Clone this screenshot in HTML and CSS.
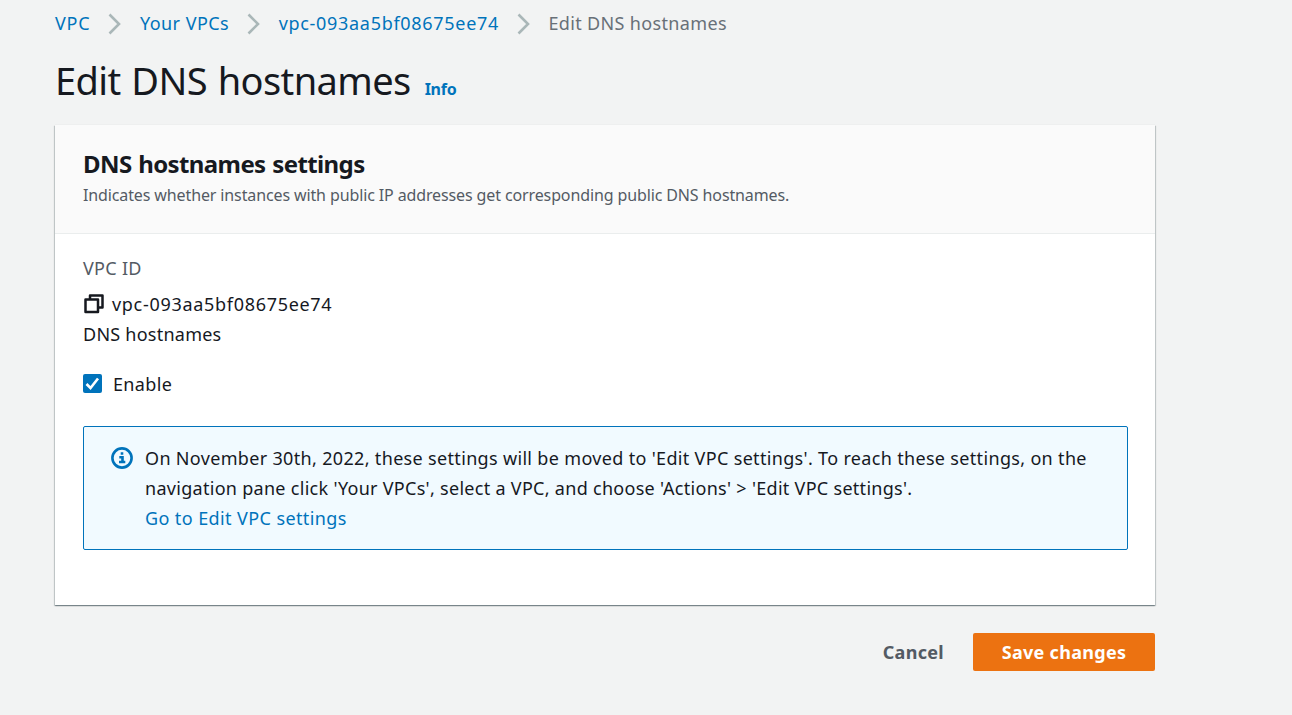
FILE: index.html
```html
<!DOCTYPE html>
<html lang="en">
<head>
<meta charset="utf-8">
<title>Edit DNS hostnames</title>
<link rel="stylesheet" href="styles.css">
</head>
<body>
<main class="page">
  <nav class="breadcrumbs">
    <a class="crumb-root">VPC</a>
    <svg class="chevron" viewBox="0 0 14 22"><path d="M1.5 2.5l9.5 9.5-9.5 9.5"/></svg>
    <a class="crumb-list">Your VPCs</a>
    <svg class="chevron" viewBox="0 0 14 22"><path d="M1.5 2.5l9.5 9.5-9.5 9.5"/></svg>
    <a class="vpc-id">vpc-093aa5bf08675ee74</a>
    <svg class="chevron" viewBox="0 0 14 22"><path d="M1.5 2.5l9.5 9.5-9.5 9.5"/></svg>
    <span class="crumb-current">Edit DNS hostnames</span>
  </nav>
  <header class="title"><h1>Edit DNS hostnames</h1><a class="info">Info</a></header>
  <section class="card">
    <div class="card-header">
      <h2>DNS hostnames settings</h2>
      <p>Indicates whether instances with public IP addresses get corresponding public DNS hostnames.</p>
    </div>
    <div class="card-body">
      <div class="label">VPC ID</div>
      <div class="copy-row">
        <svg class="copy" viewBox="0 0 21 20"><path d="M2.5 5.5h12.5v12.5h-12.5zM7 5V1.5h12.5v12H15.5"/></svg>
        <span class="vpc-id">vpc-093aa5bf08675ee74</span>
      </div>
      <div class="field">DNS hostnames</div>
      <label class="check-row">
        <svg class="checkbox" viewBox="0 0 19 19"><rect width="19" height="19" rx="2"/><path d="M3.5 10l4 4 7.5-9.5"/></svg>
        <span>Enable</span>
      </label>
      <div class="alert">
        <svg class="info-icon" viewBox="0 0 22 22"><circle cx="11" cy="11" r="9.6"/><path d="M11 5.2v2.6M8.3 10.2h3.2v5M8 15h6.3"/></svg>
        <div class="alert-text">
          <div class="alert-line">On November 30th, 2022, these settings will be moved to 'Edit VPC settings'. To reach these settings, on the</div>
          <div class="alert-line-end">navigation pane click 'Your VPCs', select a VPC, and choose 'Actions' &gt; 'Edit VPC settings'.</div>
          <a class="alert-link">Go to Edit VPC settings</a>
        </div>
      </div>
    </div>
  </section>
  <footer class="actions"><button class="cancel">Cancel</button><button class="save">Save changes</button></footer>
</main>
</body>
</html>
```
FILE: styles.css
```css
* { box-sizing: border-box; }
body { margin: 0; background: #f2f3f3; color: #16191f; font: 18px/30px "Noto Sans", "Open Sans", sans-serif; }
h1, h2, p { margin: 0; }
a { color: #0073bb; }
svg { fill: none; flex: none; }
.page { width: 1155px; padding-left: 55px; height: 715px; white-space: nowrap; }
.breadcrumbs { display: flex; align-items: center; height: 38px; padding-top: 8px; }
.crumb-root { letter-spacing: .8px; }
.crumb-list { letter-spacing: .45px; }
.vpc-id { letter-spacing: .7px; }
.crumb-current { color: #687078; letter-spacing: .34px; }
.chevron { width: 14px; height: 22px; margin: 0 18px 0 17.5px; overflow: visible; stroke: #aab7b8; stroke-width: 2.6; }
.title { display: flex; align-items: baseline; gap: 14px; height: 87px; padding-top: 13px; }
h1 { font-size: 38px; font-weight: 400; line-height: 58px; letter-spacing: -.6px; word-spacing: 1.4px; }
.info { font-size: 16px; font-weight: 700; letter-spacing: -.25px; }
.card { height: 480px; background: #fff; box-shadow: 0 1px 1px 0 rgba(0, 28, 36, .3), 1px 1px 1px 0 rgba(0, 28, 36, .15), -1px 1px 1px 0 rgba(0, 28, 36, .15), 0 0 1px 0 rgba(0, 28, 36, .1); }
.card-header { height: 109px; padding: 22px 28px; background: #fafafa; border-bottom: 1px solid #eaeded; }
h2 { font-size: 24px; line-height: 34px; font-weight: 700; letter-spacing: -.6px; word-spacing: 1px; }
.card-header p { font-size: 16px; line-height: 28px; color: #545b64; letter-spacing: -.12px; }
.card-body { padding: 19px 28px 0; }
.label { color: #545b64; margin-bottom: 6px; letter-spacing: .3px; }
.copy-row { display: flex; align-items: center; gap: 8px; }
.copy { width: 21px; height: 20px; margin-top: -1px; stroke: #16191f; stroke-width: 2.5; stroke-linejoin: round; }
.field { letter-spacing: .24px; }
.check-row { display: flex; align-items: center; gap: 11px; margin-top: 20px; letter-spacing: .35px; }
.checkbox { width: 19px; height: 19px; margin-top: -1px; }
.checkbox rect { fill: #0073bb; }
.checkbox path { stroke: #fff; stroke-width: 2.6; }
.alert { display: flex; gap: 12px; width: 1045px; height: 124px; margin-top: 27px; padding: 16px 27px; border: 1px solid #0073bb; border-radius: 2px; background: #f1faff; }
.info-icon { width: 22px; height: 22px; margin-top: 4px; stroke: #0073bb; stroke-width: 2.6; }
.alert-line { letter-spacing: .33px; }
.alert-line-end { letter-spacing: .29px; }
.alert-link { letter-spacing: .4px; }
.actions { display: flex; justify-content: flex-end; gap: 29px; margin-top: 28px; }
button { height: 38px; border: 0; border-radius: 2px; background: none; color: #545b64; font: 700 18px/38px "Noto Sans", sans-serif; padding: 0; letter-spacing: .3px; }
.save { width: 182px; color: #fff; background: #ec7211; }
```
